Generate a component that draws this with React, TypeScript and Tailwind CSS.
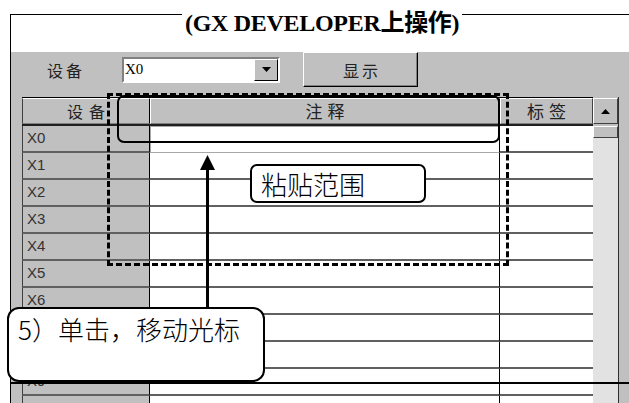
import React from "react";

const cjk = "'Noto Sans CJK SC', 'Noto Sans', sans-serif";
const rows = ["X0", "X1", "X2", "X3", "X4", "X5", "X6", "X7", "X8", "X9", "X10"];

const App: React.FC = () => {
  return (
    <div
      className="relative w-[629px] h-[403px] overflow-hidden bg-white"
      style={{ fontFamily: cjk }}
    >
      {/* window */}
      <div className="ml-[10px] mt-[14px] w-[640px] border-l border-t border-black">
        <div className="h-[23px] bg-white" />
        <div className="bg-[#c0c0c0] pb-[40px]">
          {/* toolbar */}
          <div className="flex items-center h-[35px] mt-[14px] pl-[36px]">
            <span className="w-[75px] text-[16px] tracking-[3px] text-[#222]">设备</span>
            <div className="flex items-center w-[158px] h-[26px] bg-white border-2 border-t-[#808080] border-l-[#808080] border-b-white border-r-white">
              <span className="flex-1 pl-[1px] text-[15px] text-black font-['Liberation_Serif',serif]">X0</span>
              <div className="flex items-center justify-center w-[24px] h-[22px] bg-[#c0c0c0] border border-t-white border-l-white border-b-black border-r-black">
                <svg width="9" height="5" viewBox="0 0 9 5">
                  <path d="M0 0h9L4.5 5z" fill="#000" />
                </svg>
              </div>
            </div>
            <div className="ml-[23px] flex items-center justify-center w-[115px] h-[35px] border border-t-white border-l-white border-b-black border-r-black shadow-[inset_-1px_-1px_0_#808080] text-[16px] tracking-[3px] pl-[3px] text-[#222]">
              显示
            </div>
          </div>

          {/* table */}
          <div className="flex mt-[10px] ml-[11px] w-[597px]">
            <div className="w-[571px]">
              <div className="flex h-[29px] border-t border-black border-b-2 border-b-[#202020]">
                <div className="flex items-center justify-center w-[128px] border border-t-white border-l-[#404040] border-r-black border-b-[#808080] text-[16px] tracking-[6px] pl-[6px] text-[#222]">
                  设备
                </div>
                <div className="flex items-center justify-center w-[350px] border border-t-white border-l-white border-r-black border-b-[#808080] text-[17px] tracking-[5px] pl-[5px] text-[#222]">
                  注释
                </div>
                <div className="flex items-center justify-center w-[93px] border border-t-white border-l-white border-r-[#404040] border-b-[#808080] text-[17px] tracking-[5px] pl-[5px] text-[#222]">
                  标签
                </div>
              </div>
              {rows.map((r, i) => (
                <div key={r} className="flex h-[27px]">
                  <div className="flex items-center w-[128px] pl-[4px] bg-[#c0c0c0] border-l border-l-[#404040] border-r border-r-black border-b-2 border-b-[#606060] text-[15px] text-[#333] font-['Liberation_Sans',sans-serif]">
                    {r}
                  </div>
                  <div
                    className={
                      i === 0
                        ? "w-[350px] bg-white border-r border-r-black border border-[#a8a8a8]"
                        : "w-[350px] bg-white border-r border-r-black border-b-2 border-b-[#606060]"
                    }
                  />
                  <div className="w-[93px] bg-white border-b-2 border-b-[#606060]" />
                </div>
              ))}
            </div>
            {/* scrollbar */}
            <div className="w-[26px] flex flex-col border-r border-r-[#303030]">
              <div className="flex items-center justify-center h-[26px] mt-[1px] bg-[#c0c0c0] border border-t-white border-l-white border-b-[#404040] border-r-[#404040]">
                <svg width="9" height="5" viewBox="0 0 9 5">
                  <path d="M4.5 0L9 5H0z" fill="#000" />
                </svg>
              </div>
              <div className="h-[12px] mt-[2px] bg-[#c0c0c0] border border-t-white border-l-white border-b-[#404040] border-r-[#404040]" />
              <div className="flex-1 bg-[#e2e2e2]" />
            </div>
          </div>
        </div>
      </div>

      {/* title */}
      <div className="absolute left-[182px] top-[9px] px-[3px] bg-white text-[24px] leading-[28px] tracking-[-0.3px] font-bold text-black whitespace-nowrap font-['Liberation_Serif','Noto_Sans_CJK_SC',serif]">
        (GX DEVELOPER上操作)
      </div>

      {/* annotations */}
      <div className="absolute left-[107px] top-[93px] w-[402px] h-[173px] border-[3px] border-dashed border-black" />
      <div className="absolute left-[117px] top-[95px] w-[383px] h-[48px] border-2 border-black rounded-[7px]" />

      <div className="absolute left-[206px] top-[166px] w-[3px] h-[142px] bg-black" />
      <svg className="absolute left-[200px] top-[155px]" width="15" height="15" viewBox="0 0 15 15">
        <path d="M7.5 0L15 15H0z" fill="#000" />
      </svg>

      <div className="absolute left-[250px] top-[164px] w-[176px] h-[39px] flex items-center pl-[9px] bg-white border-2 border-black rounded-[7px] text-[26px] font-light text-black">
        粘贴范围
      </div>

      <div className="absolute left-[7px] top-[307px] w-[258px] h-[75px] pl-[9px] pt-[2px] bg-white border-2 border-black rounded-[12px] text-[26px] leading-[36px] font-light text-black whitespace-nowrap">
        5）单击，移动光标
      </div>

      <div className="absolute left-[10px] top-[382px] w-[619px] h-[2px] bg-black" />
    </div>
  );
};

export default App;
